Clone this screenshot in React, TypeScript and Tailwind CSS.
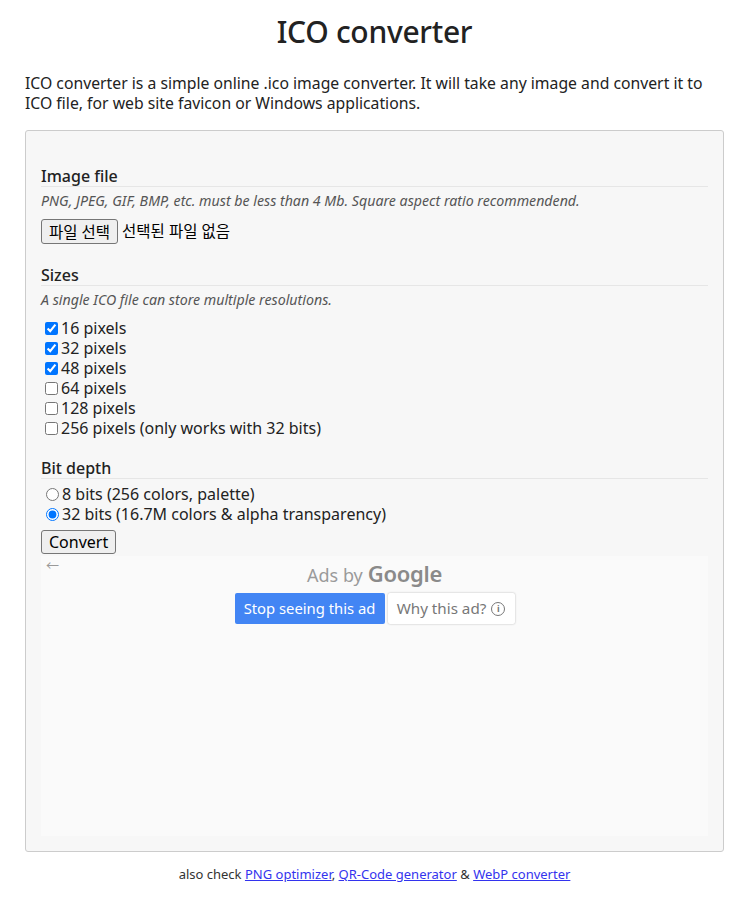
import React from 'react';

const font = { fontFamily: '"Noto Sans", "Noto Sans CJK KR", sans-serif' };

const sizes = [
  { label: '16 pixels', checked: true },
  { label: '32 pixels', checked: true },
  { label: '48 pixels', checked: true },
  { label: '64 pixels', checked: false },
  { label: '128 pixels', checked: false },
  { label: '256 pixels (only works with 32 bits)', checked: false },
];

const Section: React.FC<{ title: string; className?: string }> = ({ title, className }) => (
  <div className={`h-[21px] border-b border-[#e6e6e6] text-[16px] leading-[20px] font-medium text-[#222] ${className ?? ''}`}>
    {title}
  </div>
);

export default function App() {
  return (
    <div className="min-h-[902px] bg-white text-[#222]" style={font}>
      <div className="pl-[25px] pr-[22px]">
        <h1 className="pt-[12px] text-center text-[30px] leading-[40px] font-medium text-[#222] tracking-[-0.3px]">
          ICO converter
        </h1>
        <p className="mt-[21px] text-[15.75px] leading-[20px] text-[#222]">
          ICO converter is a simple online .ico image converter. It will take any image and convert it to ICO file, for
          web site favicon or Windows applications.
        </p>

        <div className="mt-[17px] rounded-[3px] border border-[#cccccc] bg-[#f7f7f7] pl-[15px] pr-[15px] pt-[35px] pb-[15px]">
          <Section title="Image file" />
          <div className="mt-[4px] text-[14.2px] leading-[20px] italic text-[#555]">
            PNG, JPEG, GIF, BMP, etc. must be less than 4 Mb. Square aspect ratio recommendend.
          </div>
          <div className="mt-[8px] flex h-[25px] items-center text-[15.5px]">
            <button className="h-[25px] rounded-[3px] border border-[#767676] bg-[#efefef] px-[7px] text-[15.5px] leading-[20px] text-black">
              파일 선택
            </button>
            <span className="ml-[4px] text-black">선택된 파일 없음</span>
          </div>

          <Section title="Sizes" className="mt-[21px]" />
          <div className="mt-[4px] text-[14.2px] leading-[20px] italic text-[#555]">
            A single ICO file can store multiple resolutions.
          </div>
          <div className="mt-[8px]">
            {sizes.map((s) => (
              <label key={s.label} className="flex h-[20px] items-center text-[16px] text-[#222]">
                <input type="checkbox" defaultChecked={s.checked} className="ml-[4px] mr-[3px] h-[13px] w-[13px]" />
                {s.label}
              </label>
            ))}
          </div>

          <Section title="Bit depth" className="mt-[20px]" />
          <div className="mt-[5px]">
            <label className="flex h-[20px] items-center text-[16px] text-[#222]">
              <input type="radio" name="bits" className="ml-[5px] mr-[3px] h-[13px] w-[13px]" />
              8 bits (256 colors, palette)
            </label>
            <label className="flex h-[20px] items-center text-[16px] text-[#222]">
              <input type="radio" name="bits" defaultChecked className="ml-[5px] mr-[3px] h-[13px] w-[13px]" />
              32 bits (16.7M colors &amp; alpha transparency)
            </label>
          </div>
          <button className="mt-[6px] h-[24px] rounded-[3px] border border-[#767676] bg-[#efefef] px-[7px] text-[16px] leading-[20px] text-black">
            Convert
          </button>

          <div className="relative mt-[2px] h-[280px] bg-[#fafafa]">
            <span className="absolute left-[5px] top-[0px] text-[13px] leading-[18px] text-[#999]">←</span>
            <div className="flex items-baseline justify-center gap-[5px] pt-[6px] text-[#9a9a9a]">
              <span className="text-[18px] leading-[22px]">Ads by</span>
              <span className="text-[22px] leading-[22px] font-semibold tracking-[-0.3px] text-[#8a8a8a]">Google</span>
            </div>
            <div className="mt-[7px] flex justify-center gap-[3px]">
              <div className="flex h-[31px] w-[150px] items-center justify-center rounded-[2px] bg-[#4285f4] text-[14.8px] text-white">
                Stop seeing this ad
              </div>
              <div className="flex h-[31px] w-[127px] items-center justify-center gap-[5px] rounded-[2px] bg-white text-[15.2px] text-[#777] shadow-[0_0_2px_rgba(0,0,0,0.3)]">
                Why this ad?
                <span className="flex h-[14px] w-[14px] items-center justify-center rounded-full border border-[#777] text-[9px] font-bold leading-none">
                  i
                </span>
              </div>
            </div>
          </div>
        </div>

        <div className="mt-[14px] text-center text-[13px] leading-[16px] text-[#333]">
          also check{' '}
          <a href="#" className="text-[#3333ee] underline">PNG optimizer</a>
          ,{' '}
          <a href="#" className="text-[#3333ee] underline">QR-Code generator</a>
          {' '}&amp;{' '}
          <a href="#" className="text-[#3333ee] underline">WebP converter</a>
        </div>
      </div>
    </div>
  );
}
